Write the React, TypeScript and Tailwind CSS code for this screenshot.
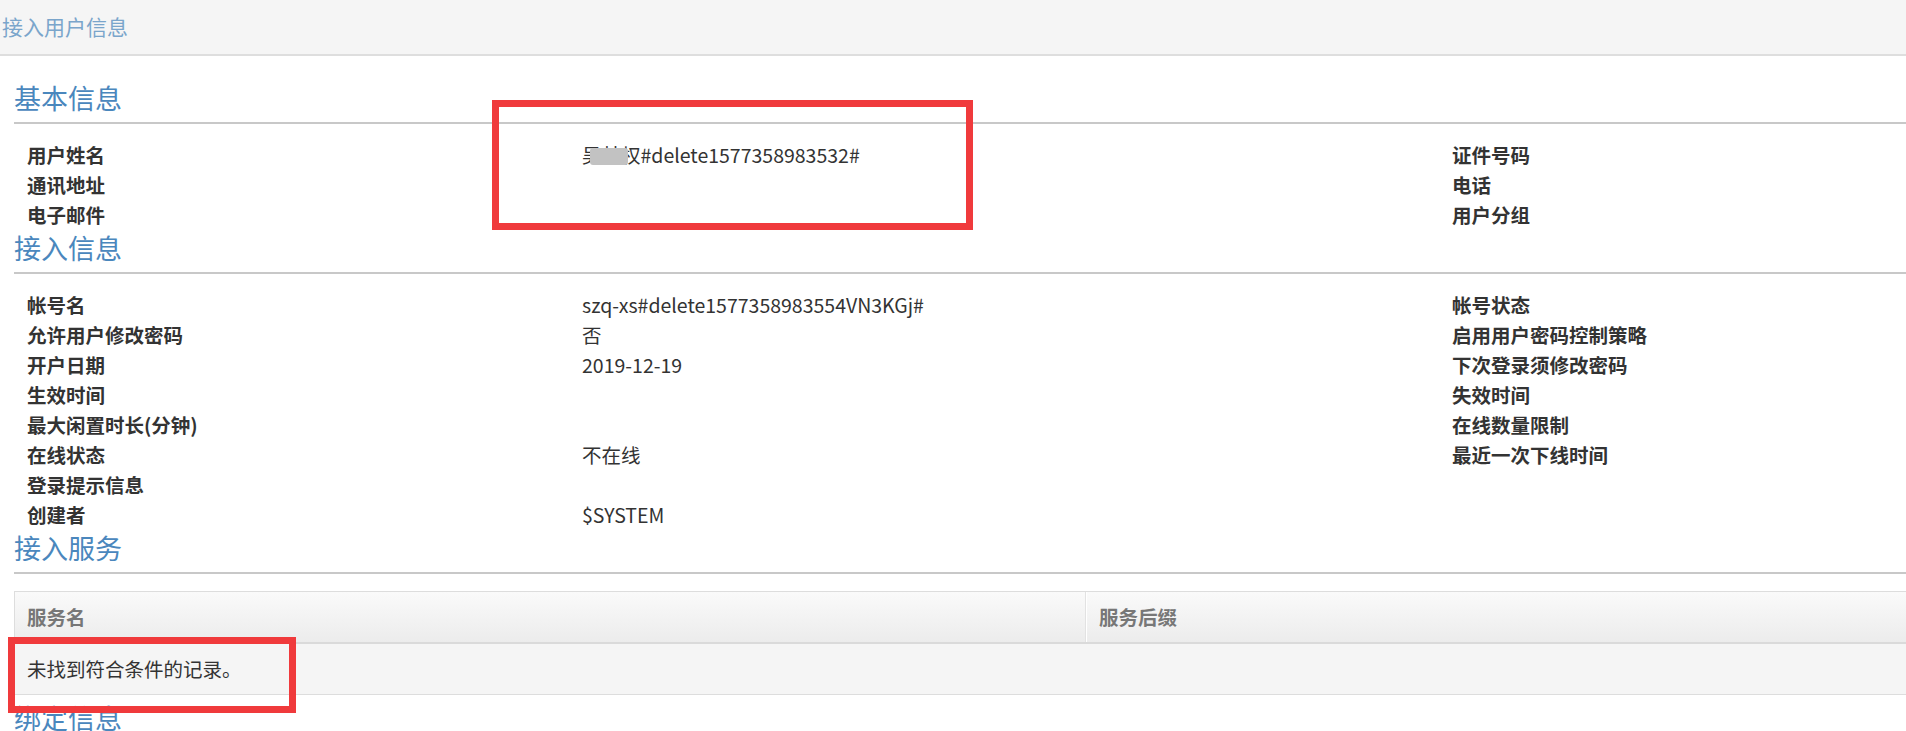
import React from "react";

const FONT = { fontFamily: '"Noto Sans CJK SC", "Noto Sans", sans-serif' };

type Row = { l: string; v?: React.ReactNode; r?: string };

function Heading({ text, tight }: { text: string; tight?: boolean }) {
  return (
    <div
      className={
        tight
          ? "h-[36px] leading-[36px] text-[27px] text-[#4a87bd] pb-[6px] box-content border-b-2 border-[#c8c8c8] mb-[16px]"
          : "h-[36px] leading-[36px] text-[27px] text-[#4a87bd] pb-[6px] box-content border-b-2 border-[#c8c8c8] mb-[17px]"
      }
    >
      {text}
    </div>
  );
}

function InfoRows({ rows }: { rows: Row[] }) {
  return (
    <div className="flex flex-col">
      {rows.map((r, i) => (
        <div key={i} className="grid grid-cols-[568px_870px_1fr] h-[30px] items-center text-[19.5px] text-[#333]">
          <div className="pl-[13px] font-bold whitespace-nowrap">{r.l}</div>
          <div className="whitespace-nowrap">{r.v ?? ""}</div>
          <div className="font-bold whitespace-nowrap">{r.r ?? ""}</div>
        </div>
      ))}
    </div>
  );
}

export default function App() {
  const nameValue = (
    <span className="relative inline-block">
      吴某权#delete1577358983532#
      <span className="absolute left-[8px] top-[8px] w-[38px] h-[17px] bg-[#c2c2c2] rounded-[3px] blur-[0.5px]" />
    </span>
  );

  const basic: Row[] = [
    { l: "用户姓名", v: nameValue, r: "证件号码" },
    { l: "通讯地址", r: "电话" },
    { l: "电子邮件", r: "用户分组" },
  ];

  const access: Row[] = [
    { l: "帐号名", v: "szq-xs#delete1577358983554VN3KGj#", r: "帐号状态" },
    { l: "允许用户修改密码", v: "否", r: "启用用户密码控制策略" },
    { l: "开户日期", v: "2019-12-19", r: "下次登录须修改密码" },
    { l: "生效时间", r: "失效时间" },
    { l: "最大闲置时长(分钟)", r: "在线数量限制" },
    { l: "在线状态", v: "不在线", r: "最近一次下线时间" },
    { l: "登录提示信息" },
    { l: "创建者", v: "$SYSTEM" },
  ];

  return (
    <div className="relative w-[1906px] min-h-[731px] bg-white overflow-hidden" style={FONT}>
      <div className="h-[56px] bg-[#f5f5f5] border-b-2 border-[#dedede] flex items-center pl-[2px]">
        <span className="text-[21px] text-[#7aa5cb]">接入用户信息</span>
      </div>

      <div className="pl-[14px] pt-[24px]">
        <Heading text="基本信息" tight />
        <InfoRows rows={basic} />
        <Heading text="接入信息" tight />
        <InfoRows rows={access} />
        <Heading text="接入服务" />

        <div className="border-t border-l border-[#dddddd] mb-[5px]">
          <div className="grid grid-cols-[1071px_1fr] h-[52px] bg-gradient-to-b from-[#fafafa] to-[#ececec] border-b-2 border-[#dadada] text-[19.5px] font-bold text-[#777]">
            <div className="pl-[12px] flex items-center border-r border-[#e2e2e2]">服务名</div>
            <div className="pl-[12px] flex items-center border-l border-white">服务后缀</div>
          </div>
          <div className="h-[51px] bg-[#f5f5f5] border-b border-[#dddddd] flex items-center pl-[12px] text-[19.5px] text-[#333]">
            未找到符合条件的记录。
          </div>
        </div>

        <Heading text="绑定信息" />
      </div>

      <div className="absolute left-[492px] top-[100px] w-[481px] h-[130px] border-[7px] border-[#f03a3c]" />
      <div className="absolute left-[8px] top-[637px] w-[288px] h-[76px] border-[7px] border-[#f03a3c]" />
    </div>
  );
}
